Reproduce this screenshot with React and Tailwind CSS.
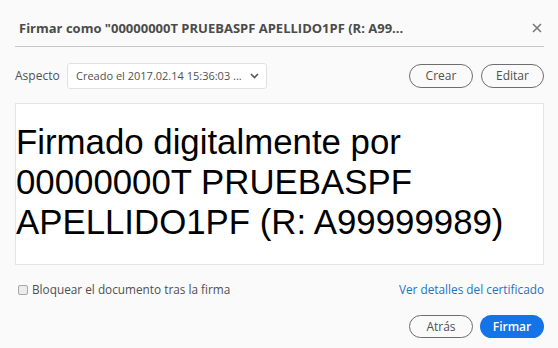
import React from "react";

const ui = { fontFamily: '"Open Sans", "Noto Sans", sans-serif' };

function Pill({ children, primary }) {
  return (
    <button
      type="button"
      className={
        primary
          ? "h-[23px] w-[64px] rounded-full bg-[#1473e6] text-[12px] font-semibold text-white"
          : "h-[23px] w-[64px] rounded-full border-[1.5px] border-[#6e6e6e] bg-[#fafafa] text-[12px] text-[#505050]"
      }
    >
      {children}
    </button>
  );
}

export default function App() {
  return (
    <div className="h-[348px] w-[558px] overflow-hidden bg-[#fafafa] pl-[15px] pr-[14px]" style={ui}>
      <div className="flex h-[47px] items-end border-b-[1.5px] border-[#c6c6c6] pb-[9px]">
        <div className="pl-[4px] text-[13px] font-bold leading-[18px] text-[#4b4b4b]">
          Firmar como "00000000T PRUEBASPF APELLIDO1PF (R: A99...
        </div>
        <svg className="mb-[4px] ml-auto mr-[2px]" width="10" height="10" viewBox="0 0 10 10">
          <path d="M1 1l8 8M9 1l-8 8" stroke="#7a7a7a" strokeWidth="1.6" />
        </svg>
      </div>

      <div className="mt-[16px] flex h-[26px] items-center">
        <span className="w-[52px] text-[12px] text-[#505050]">Aspecto</span>
        <div className="flex h-[26px] w-[200px] items-center rounded-[3px] border border-[#e1e1e1] bg-white pl-[8px] pr-[7px] text-[11px] text-[#505050]">
          <span>Creado el 2017.02.14 15:36:03 ...</span>
          <svg className="ml-auto" width="9" height="6" viewBox="0 0 9 6">
            <path d="M1 1l3.5 3.5L8 1" fill="none" stroke="#555" strokeWidth="1.6" />
          </svg>
        </div>
        <div className="ml-auto flex gap-[8px]">
          <button type="button" className="h-[24px] w-[64px] rounded-full border-[1.5px] border-[#6e6e6e] text-[12px] text-[#505050]">Crear</button>
          <button type="button" className="h-[24px] w-[63px] rounded-full border-[1.5px] border-[#6e6e6e] text-[12px] text-[#505050]">Editar</button>
        </div>
      </div>

      <div
        className="mt-[14px] h-[162px] border border-[#e4e4e4] bg-white pt-[18px] text-[34.8px] leading-[40px] text-black"
        style={{ fontFamily: '"Liberation Sans", Arial, sans-serif' }}
      >
        <div>Firmado digitalmente por</div>
        <div>00000000T PRUEBASPF</div>
        <div>APELLIDO1PF (R: A99999989)</div>
      </div>

      <div className="mt-[17px] flex h-[16px] items-center">
        <label className="flex items-center gap-[4px] pl-[3px] text-[11.8px] text-[#505050]">
          <span className="h-[10px] w-[10px] rounded-[2px] border border-[#a8a8a8] bg-[#ececec]" />
          Bloquear el documento tras la firma
        </label>
        <a className="ml-auto text-[11.8px] text-[#1f73c0]">Ver detalles del certificado</a>
      </div>

      <div className="mt-[17px] flex justify-end gap-[7px]">
        <Pill>Atrás</Pill>
        <Pill primary>Firmar</Pill>
      </div>
    </div>
  );
}
